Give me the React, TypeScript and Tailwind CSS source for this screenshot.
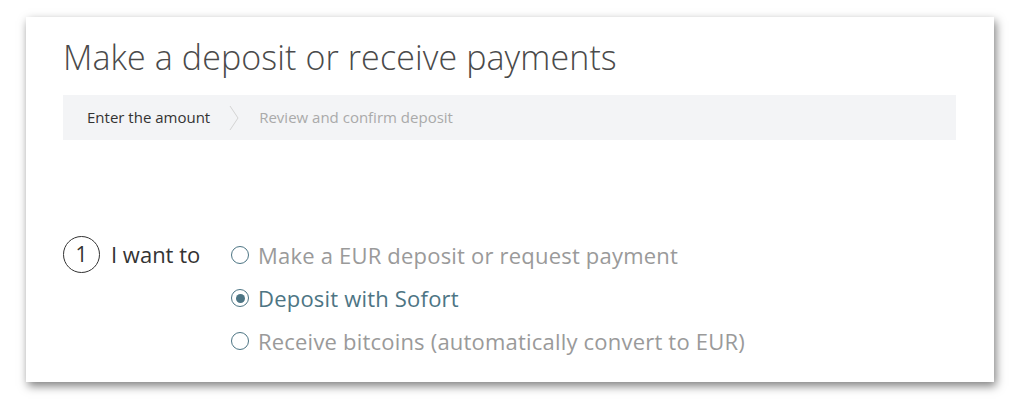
import React from "react";

const options = [
  { label: "Make a EUR deposit or request payment", checked: false },
  { label: "Deposit with Sofort", checked: true },
  { label: "Receive bitcoins (automatically convert to EUR)", checked: false },
];

const Radio: React.FC<{ checked: boolean }> = ({ checked }) => (
  <span className="flex h-[18px] w-[18px] shrink-0 items-center justify-center rounded-full border-[1.5px] border-[#4d7584] bg-white">
    {checked && <span className="h-[9px] w-[9px] rounded-full bg-[#4d7584]" />}
  </span>
);

export default function App() {
  return (
    <div className="min-h-[401px] w-[1024px] bg-white pl-[26px] pt-[17px] font-['Open_Sans',sans-serif]">
      <div className="h-[365px] w-[968px] bg-white px-[37px] pt-[18px] shadow-[2px_4px_9px_rgba(0,0,0,0.5)]">
        {/* title */}
        <h1 className="text-[34px] font-light leading-[44px] tracking-[0.1px] text-[#4a4a4a]">
          Make a deposit or receive payments
        </h1>

        {/* steps */}
        <div className="mt-[16px] flex h-[45px] w-[893px] items-center bg-[#f3f4f6] pl-[24px] text-[15px]">
          <span className="text-[#333]">Enter the amount</span>
          <svg className="ml-[19px] mr-[20px]" width="10" height="26" viewBox="0 0 10 26">
            <path d="M1 1 L9 13 L1 25" fill="none" stroke="#d4d4d4" strokeWidth="1" />
          </svg>
          <span className="text-[#aaa]">Review and confirm deposit</span>
        </div>

        {/* form */}
        <div className="mt-[96px] flex items-start">
          <div className="flex items-center">
            <span className="flex h-[37px] w-[37px] items-center justify-center rounded-full border border-[#333] text-[21px] text-[#333]">
              1
            </span>
            <span className="ml-[11px] w-[120px] text-[22px] text-[#333]">I want to</span>
          </div>
          <div className="flex flex-col gap-[13px] pt-[4px]">
            {options.map((o) => (
              <label key={o.label} className="flex items-center gap-[9px]">
                <Radio checked={o.checked} />
                <span
                  className={
                    o.checked
                      ? "text-[22px] leading-[30px] tracking-[0.2px] text-[#4d7584]"
                      : "text-[22px] leading-[30px] tracking-[0.2px] text-[#9a9a9a]"
                  }
                >
                  {o.label}
                </span>
              </label>
            ))}
          </div>
        </div>
      </div>
    </div>
  );
}
